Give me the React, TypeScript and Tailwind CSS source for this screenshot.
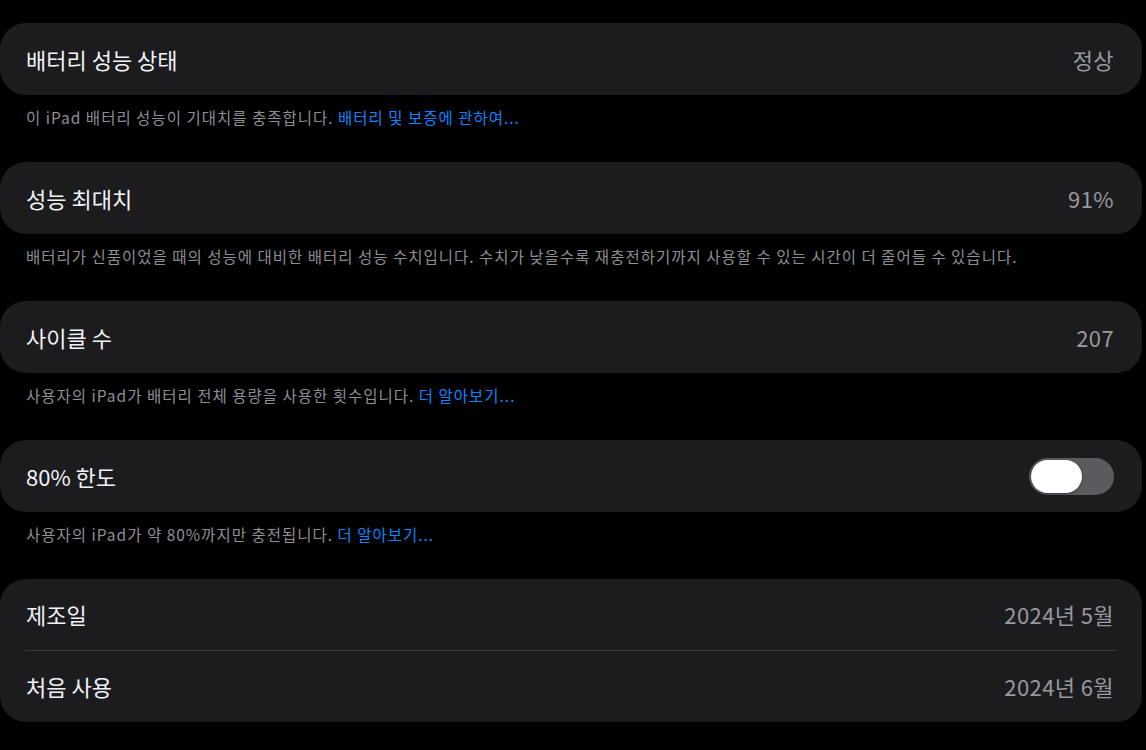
import React from "react";

const font = { fontFamily: '"Noto Sans CJK KR", "Noto Sans", sans-serif' };

function Card({ children }: { children: React.ReactNode }) {
  return <div className="mr-[4px] rounded-[26px] bg-[#1c1c1e]">{children}</div>;
}

function Row({ label, value, right, h = "h-[72px]" }: { label: string; value?: string; right?: React.ReactNode; h?: string }) {
  return (
    <div className={`flex ${h} items-center justify-between pl-[26px] pr-[28px]`}>
      <span className="text-[22px] text-[#f2f2f7]">{label}</span>
      {right ?? <span className="text-[22px] tracking-[0.4px] text-[#98989e]">{value}</span>}
    </div>
  );
}

function Footer({ text, link }: { text: string; link?: string }) {
  return (
    <div className="pl-[26px] pt-[12px] pb-[35px] text-[15.5px] leading-[20px] tracking-[1px] text-[#8e8e93]">
      {text}
      {link && <span className="text-[#0a84ff]"> {link}</span>}
    </div>
  );
}

function Toggle() {
  return (
    <div className="flex h-[37px] w-[85px] items-center rounded-full bg-[#5b5a5f] p-[2px]">
      <div className="h-[33px] w-[51px] rounded-full bg-white shadow-[0_1px_3px_rgba(0,0,0,0.4)]" />
    </div>
  );
}

export default function App() {
  return (
    <div className="min-h-[750px] w-[1146px] overflow-hidden bg-black pt-[23px]" style={font}>
      <Card>
        <Row label="배터리 성능 상태" value="정상" />
      </Card>
      <Footer text="이 iPad 배터리 성능이 기대치를 충족합니다." link="배터리 및 보증에 관하여..." />
      <Card>
        <Row label="성능 최대치" value="91%" />
      </Card>
      <Footer text="배터리가 신품이었을 때의 성능에 대비한 배터리 성능 수치입니다. 수치가 낮을수록 재충전하기까지 사용할 수 있는 시간이 더 줄어들 수 있습니다." />
      <Card>
        <Row label="사이클 수" value="207" />
      </Card>
      <Footer text="사용자의 iPad가 배터리 전체 용량을 사용한 횟수입니다." link="더 알아보기..." />
      <Card>
        <Row label="80% 한도" right={<Toggle />} />
      </Card>
      <Footer text="사용자의 iPad가 약 80%까지만 충전됩니다." link="더 알아보기..." />
      <Card>
        <Row label="제조일" value="2024년 5월" h="h-[71px]" />
        <div className="ml-[25px] mr-[26px] h-px bg-[#3a3a3c]" />
        <Row label="처음 사용" value="2024년 6월" h="h-[71px]" />
      </Card>
    </div>
  );
}
